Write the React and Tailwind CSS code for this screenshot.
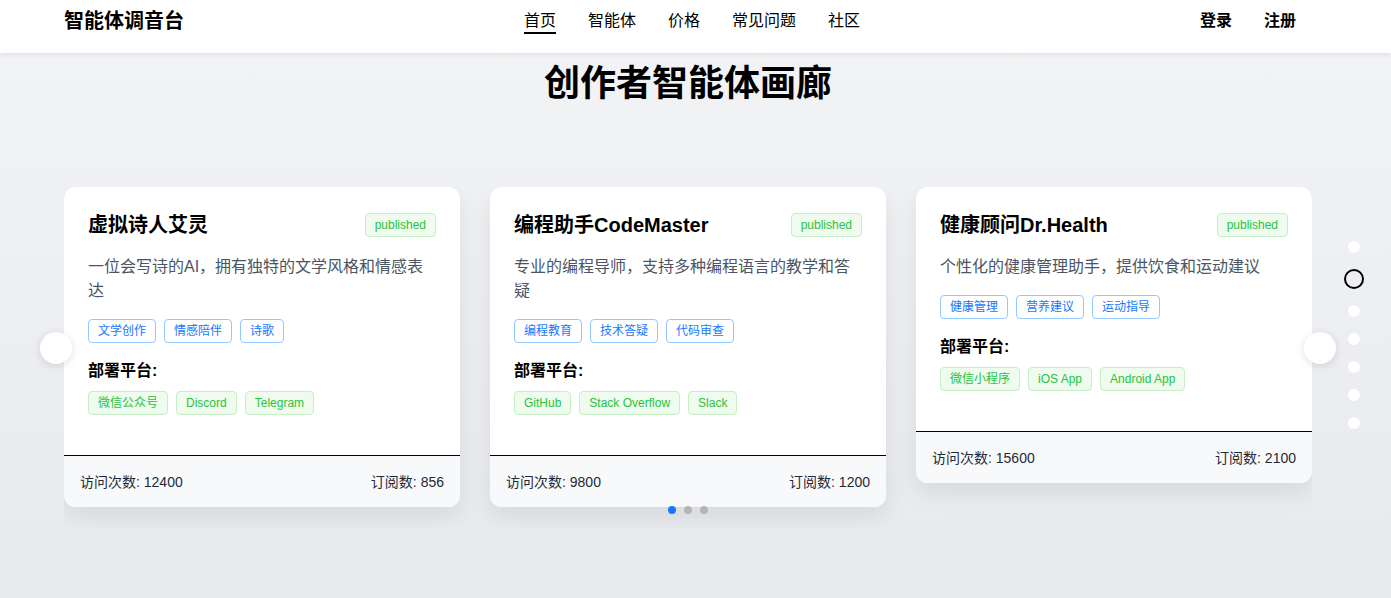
import React from 'react';

const agents = [
  {
    name: '虚拟诗人艾灵',
    desc: '一位会写诗的AI，拥有独特的文学风格和情感表达',
    tags: ['文学创作', '情感陪伴', '诗歌'],
    platforms: ['微信公众号', 'Discord', 'Telegram'],
    visits: 12400,
    subs: 856,
  },
  {
    name: '编程助手CodeMaster',
    desc: '专业的编程导师，支持多种编程语言的教学和答疑',
    tags: ['编程教育', '技术答疑', '代码审查'],
    platforms: ['GitHub', 'Stack Overflow', 'Slack'],
    visits: 9800,
    subs: 1200,
  },
  {
    name: '健康顾问Dr.Health',
    desc: '个性化的健康管理助手，提供饮食和运动建议',
    tags: ['健康管理', '营养建议', '运动指导'],
    platforms: ['微信小程序', 'iOS App', 'Android App'],
    visits: 15600,
    subs: 2100,
  },
];

const AgentCard = ({ agent }) => (
  <div className="w-[396px] shrink-0 bg-white rounded-xl shadow-[0_10px_24px_rgba(0,0,0,0.08)] overflow-hidden">
    <div className="px-6 pt-6 pb-10">
      <div className="flex items-center justify-between mb-4">
        <h3 className="text-[20px] leading-7 font-semibold text-black">{agent.name}</h3>
        <span className="text-[12px] leading-[22px] px-[9px] rounded border border-[#c6efc6] bg-[#effbee] text-[#26c43f]">
          published
        </span>
      </div>
      <p className="text-[16px] leading-6 text-[#4b5563] mb-4">{agent.desc}</p>
      <div className="flex gap-2 mb-4">
        {agent.tags.map((t) => (
          <span
            key={t}
            className="text-[12px] leading-[22px] px-[9px] rounded border border-[#91caff] bg-white text-[#1677ff]"
          >
            {t}
          </span>
        ))}
      </div>
      <div className="text-[16px] leading-6 font-semibold text-black mb-2">部署平台:</div>
      <div className="flex gap-2">
        {agent.platforms.map((p) => (
          <span
            key={p}
            className="text-[12px] leading-[22px] px-[9px] rounded border border-[#c6efc6] bg-[#effbee] text-[#26c43f]"
          >
            {p}
          </span>
        ))}
      </div>
    </div>
    <div className="border-t border-black bg-[#f8f9fb] px-4 pt-4 pb-[15px] flex justify-between text-[14px] leading-5 text-[#1f2937]">
      <span>访问次数: {agent.visits}</span>
      <span>订阅数: {agent.subs}</span>
    </div>
  </div>
);

const App = () => {
  const navItems = ['首页', '智能体', '价格', '常见问题', '社区'];

  return (
    <div
      className="relative h-[598px] overflow-hidden bg-linear-to-b from-[#f3f4f6] to-[#e8e9ed]"
      style={{ fontFamily: '"Liberation Sans", "Noto Sans CJK SC", sans-serif' }}
    >
      <header className="h-[53px] bg-white shadow-[0_2px_6px_rgba(0,0,0,0.08)] flex items-start pt-[9px] pl-16 pr-[95px]">
        <div className="w-[460px] text-[20px] leading-6 font-bold text-black">智能体调音台</div>
        <nav className="flex gap-8 text-[16px] text-black">
          {navItems.map((n, i) => (
            <a key={n} className="relative leading-6 cursor-pointer">
              {n}
              {i === 0 && <span className="absolute left-0 right-0 -bottom-px h-[2px] bg-black"></span>}
            </a>
          ))}
        </nav>
        <div className="ml-auto flex gap-8 text-[16px] leading-6 font-semibold text-black">
          <button>登录</button>
          <button>注册</button>
        </div>
      </header>

      <div className="ml-16 w-[1248px]">
        <h1 className="mt-[11px] text-center text-[36px] leading-10 font-bold text-black">创作者智能体画廊</h1>

        <div className="relative mt-[83px]">
          <div className="overflow-hidden pb-5">
            <div className="flex items-start gap-[30px]">
              {agents.map((a) => (
                <AgentCard key={a.name} agent={a} />
              ))}
            </div>
          </div>
          <div className="absolute left-0 right-0 top-[319px] flex justify-center gap-2">
            <span className="w-2 h-2 rounded-full bg-[#1677ff]"></span>
            <span className="w-2 h-2 rounded-full bg-[#b5b5b5]"></span>
            <span className="w-2 h-2 rounded-full bg-[#b5b5b5]"></span>
          </div>
          <button className="absolute -left-6 top-[145px] w-8 h-8 rounded-full bg-white shadow-[0_2px_8px_rgba(0,0,0,0.12)]"></button>
          <button className="absolute -right-6 top-[145px] w-8 h-8 rounded-full bg-white shadow-[0_2px_8px_rgba(0,0,0,0.12)]"></button>
        </div>
      </div>

      <div className="absolute left-[1344px] top-[241px] w-5 flex flex-col items-center gap-4">
        <span className="w-3 h-3 rounded-full bg-white"></span>
        <span className="w-5 h-5 rounded-full border-2 border-black"></span>
        <span className="w-3 h-3 rounded-full bg-white"></span>
        <span className="w-3 h-3 rounded-full bg-white"></span>
        <span className="w-3 h-3 rounded-full bg-white"></span>
        <span className="w-3 h-3 rounded-full bg-white"></span>
        <span className="w-3 h-3 rounded-full bg-white"></span>
      </div>
    </div>
  );
};

export default App;
